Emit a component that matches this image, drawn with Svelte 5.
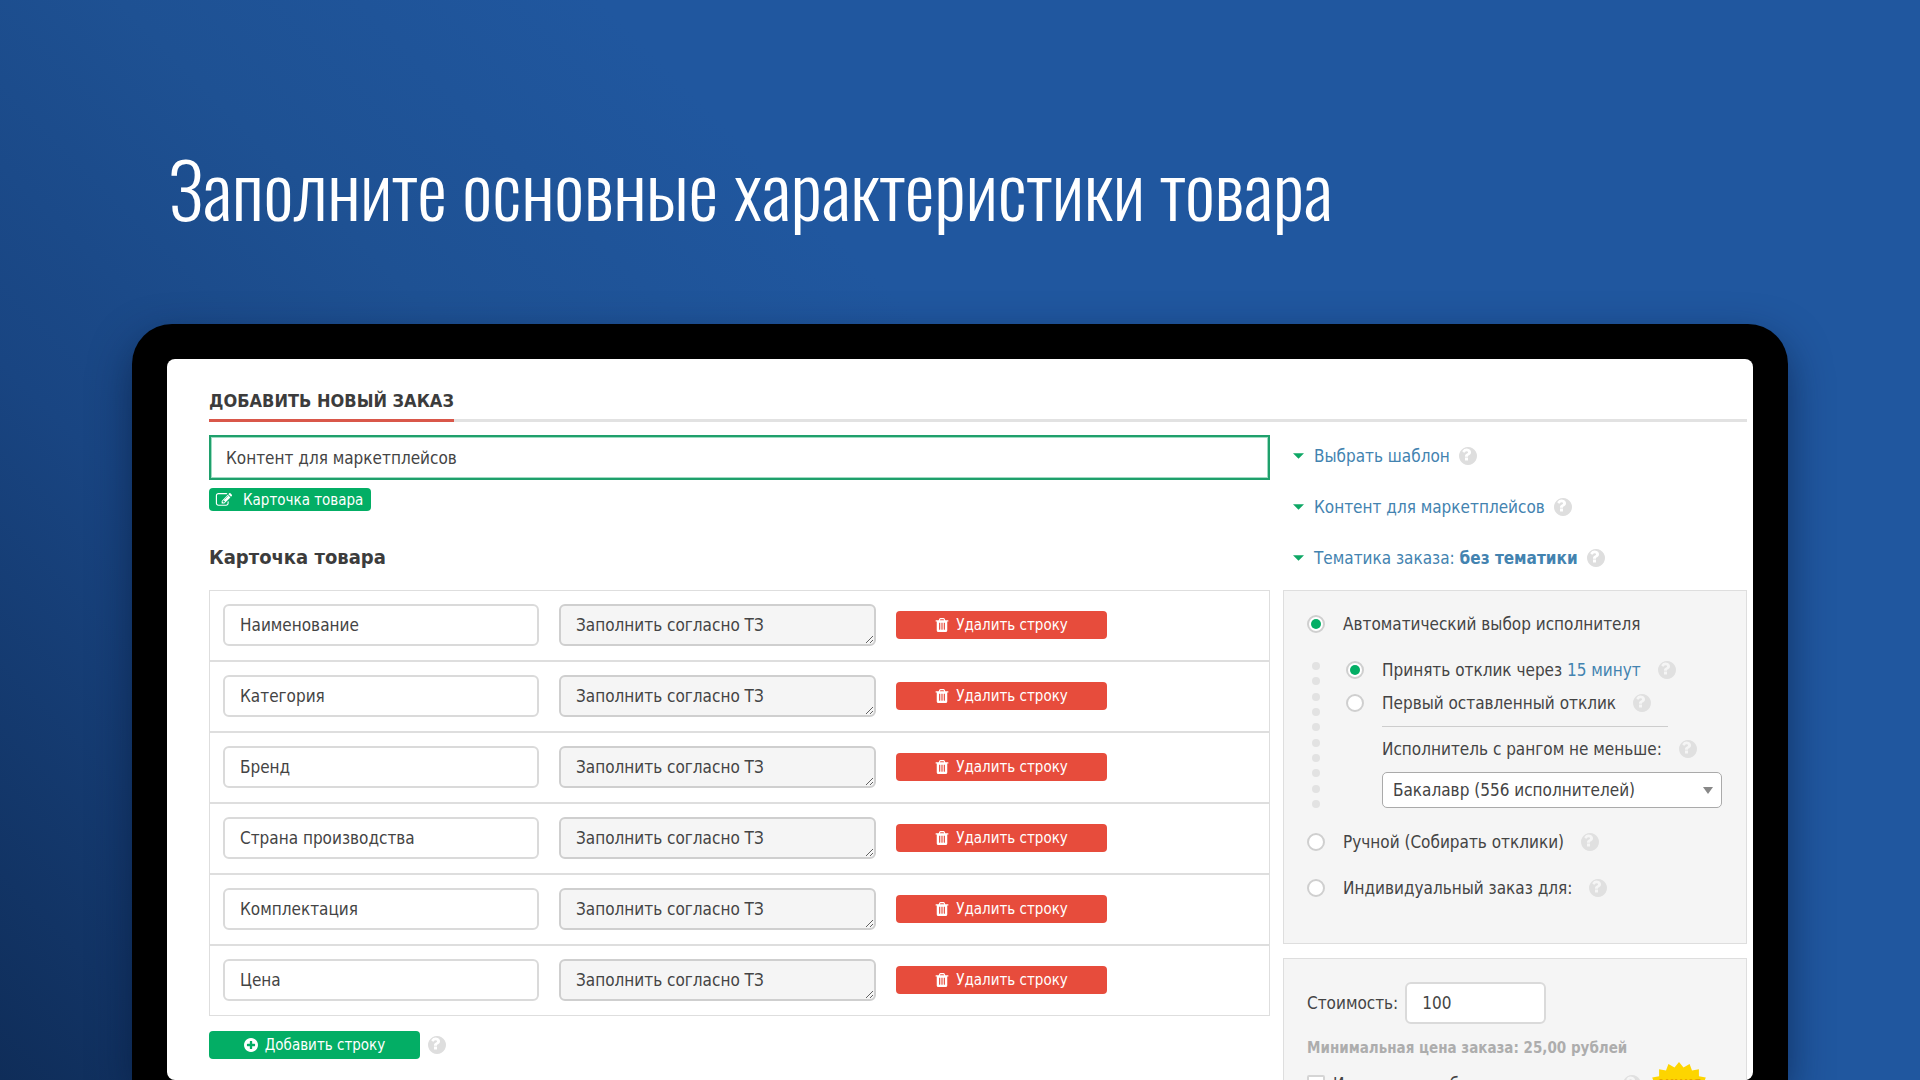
<script>
  const ICONS = {
    help: 'M896 1248v-192q0-14-9-23t-23-9h-192q-14 0-23 9t-9 23v192q0 14 9 23t23 9h192q14 0 23-9t9-23zM1152 576q0-88-55.5-163t-138.5-116-170-41q-243 0-371 213-15 24 8 42l132 100q7 6 19 6 16 0 25-12 53-68 86-92 34-24 86-24 48 0 85.5 26t37.5 59q0 38-20 61t-68 45q-63 28-115.5 86.5t-52.5 125.5v36q0 14 9 23t23 9h192q14 0 23-9t9-23q0-19 21.5-49.5t54.5-49.5q32-18 49-28.5t46-35 44.5-48 28-60.5 12.5-81zM1664 896q0 209-103 385.5t-279.5 279.5-385.5 103-385.5-103-279.5-279.5-103-385.5 103-385.5 279.5-279.5 385.5-103 385.5 103 279.5 279.5 103 385.5z',
    plus: 'M1344 960v-128q0-26-19-45t-45-19h-256v-256q0-26-19-45t-45-19h-128q-26 0-45 19t-19 45v256h-256q-26 0-45 19t-19 45v128q0 26 19 45t45 19h256v256q0 26 19 45t45 19h128q26 0 45-19t19-45v-256h256q26 0 45-19t19-45zM1664 896q0 209-103 385.5t-279.5 279.5-385.5 103-385.5-103-279.5-279.5-103-385.5 103-385.5 279.5-279.5 385.5-103 385.5 103 279.5 279.5 103 385.5z',
    trash: 'M704 1376v-704q0-14-9-23t-23-9h-64q-14 0-23 9t-9 23v704q0 14 9 23t23 9h64q14 0 23-9t9-23zm256 0v-704q0-14-9-23t-23-9h-64q-14 0-23 9t-9 23v704q0 14 9 23t23 9h64q14 0 23-9t9-23zm256 0v-704q0-14-9-23t-23-9h-64q-14 0-23 9t-9 23v704q0 14 9 23t23 9h64q14 0 23-9t9-23zm-544-992h448l-48-117q-7-9-17-11h-317q-10 2-17 11zm928 32v64q0 14-9 23t-23 9h-96v948q0 83-47 143.5t-113 60.5h-832q-66 0-113-58.5t-47-141.5v-952h-96q-14 0-23-9t-9-23v-64q0-14 9-23t23-9h309l70-167q15-37 54-63t79-26h320q40 0 79 26t54 63l70 167h309q14 0 23 9t9 23z',
    edit: 'M888 1184l116-116-152-152-116 116v56h96v96h56zm440-720q-16-16-33 1l-350 350q-17 17-1 33t33-1l350-350q17-17 1-33zm80 594v190q0 119-84.5 203.5t-203.5 84.5h-832q-119 0-203.5-84.5t-84.5-203.5v-832q0-119 84.5-203.5t203.5-84.5h832q63 0 117 25 15 7 18 23 3 17-9 29l-49 49q-14 14-32 8-23-6-45-6h-832q-66 0-113 47t-47 113v832q0 66 47 113t113 47h832q66 0 113-47t47-113v-126q0-13 9-22l64-64q15-15 35-7t20 29zm-96-738l288 288-672 672h-288v-288zm444 132l-92 92-288-288 92-92q28-28 68-28t68 28l152 152q28 28 28 68t-28 68z'
  };

  let rows = $state(
    ['Наименование', 'Категория', 'Бренд', 'Страна производства', 'Комплектация', 'Цена'].map((name) => ({
      name,
      value: 'Заполнить согласно ТЗ'
    }))
  );
  let mode = $state('auto');
  let accept = $state('delay');
  let title = $state('Контент для маркетплейсов');
  let price = $state('100');

  const links = [
    { text: 'Выбрать шаблон' },
    { text: 'Контент для маркетплейсов' },
    { text: 'Тематика заказа: ', strong: 'без тематики' }
  ];
  const dots = Array.from({ length: 10 });

  // Outline of the badge: 18 teeth alternating between two radii.
  const burst = Array.from({ length: 36 }, (_, i) => {
    const r = i % 2 ? 26 : 31;
    const a = (i * Math.PI) / 18 - Math.PI / 2;
    return `${(31 + r * Math.cos(a)).toFixed(1)},${(31 + r * Math.sin(a)).toFixed(1)}`;
  }).join(' ');

  const addRow = () => rows.push({ name: '', value: '' });
  const removeRow = (i) => rows.splice(i, 1);
</script>

{#snippet icon(name, cls)}
  <svg class={cls} viewBox="128 128 1536 1536" aria-hidden="true"><path fill="currentColor" fill-rule="evenodd" d={ICONS[name]} /></svg>
{/snippet}

{#snippet help()}
  <button type="button" class="help" aria-label="Подсказка">{@render icon('help', 'icon-help')}</button>
{/snippet}

<div class="stage">
  <header><h1>Заполните основные характеристики товара</h1></header>

  <div class="device">
    <main class="screen">
      <div class="tab-line"><h2>ДОБАВИТЬ НОВЫЙ ЗАКАЗ</h2></div>

      <form class="columns">
        <section class="left">
          <input class="order-title" type="text" aria-label="Название заказа" bind:value={title} />
          <button type="button" class="tag">{@render icon('edit', 'icon-edit')}Карточка товара</button>

          <h3>Карточка товара</h3>
          <ul class="rows">
            {#each rows as row, i}
              <li>
                <input class="field" type="text" aria-label="Характеристика" bind:value={row.name} />
                <textarea class="field value" rows="1" aria-label="Значение" bind:value={row.value}></textarea>
                <button type="button" class="btn remove" onclick={() => removeRow(i)}>
                  {@render icon('trash', 'icon-btn')}Удалить строку
                </button>
              </li>
            {/each}
          </ul>
          <div class="add-line">
            <button type="button" class="btn add" onclick={addRow}>{@render icon('plus', 'icon-btn')}Добавить строку</button>
            {@render help()}
          </div>
        </section>

        <aside>
          <ul class="links">
            {#each links as link}
              <li>
                <svg class="caret" viewBox="0 0 12 6" aria-hidden="true"><path d="M0 0h12L6 6z" fill="currentColor" /></svg>
                <a href="#options">{link.text}{#if link.strong}<b>{link.strong}</b>{/if}</a>
                {@render help()}
              </li>
            {/each}
          </ul>

          <div class="panel performers" id="options">
            <label class="line"><input type="radio" name="mode" value="auto" bind:group={mode} />Автоматический выбор исполнителя</label>
            <div class="sub">
              <div class="dots" aria-hidden="true">{#each dots as _}<i></i>{/each}</div>
              <div class="sub-body">
                <div class="line">
                  <input type="radio" id="delay" name="accept" value="delay" bind:group={accept} />
                  <label for="delay">Принять отклик через <a href="#delay">15 минут</a></label>
                  {@render help()}
                </div>
                <div class="line second">
                  <input type="radio" id="first" name="accept" value="first" bind:group={accept} />
                  <label for="first">Первый оставленный отклик</label>
                  {@render help()}
                </div>
                <div class="rank">
                  <hr />
                  <div class="line">
                    <label for="rank">Исполнитель с рангом не меньше:</label>
                    {@render help()}
                  </div>
                  <div class="select">
                    <select id="rank"><option>Бакалавр (556 исполнителей)</option></select>
                    <svg class="arrow" viewBox="0 0 10 7" aria-hidden="true"><path d="M0 0h10L5 7z" fill="currentColor" /></svg>
                  </div>
                </div>
              </div>
            </div>
            <div class="line mode">
              <input type="radio" id="manual" name="mode" value="manual" bind:group={mode} />
              <label for="manual">Ручной (Собирать отклики)</label>
              {@render help()}
            </div>
            <div class="line mode">
              <input type="radio" id="single" name="mode" value="single" bind:group={mode} />
              <label for="single">Индивидуальный заказ для:</label>
              {@render help()}
            </div>
          </div>

          <div class="panel cost">
            <div class="price">
              <label for="price">Стоимость:</label>
              <input id="price" class="field" type="text" bind:value={price} />
            </div>
            <p>Минимальная цена заказа: 25,00 рублей</p>
            <div class="line bonus">
              <input type="checkbox" id="bonus" />
              <label for="bonus">Использовать бонусные средства</label>
              {@render help()}
            </div>
            <span class="burst">
              <svg viewBox="0 0 62 62" aria-hidden="true"><polygon points={burst} fill="#fdd500" /></svg>
              <span>АКЦИЯ</span>
            </span>
          </div>
        </aside>
      </form>
    </main>
  </div>
</div>

<style>
  :global(body) {
    margin: 0;
    background: #20579f;
  }
  * {
    box-sizing: border-box;
  }
  h1, h2, h3, p, ul {
    margin: 0;
    padding: 0;
  }
  ul {
    list-style: none;
  }
  .stage {
    display: flex;
    flex-direction: column;
    height: 100vh;
    padding: 0 132px;
    overflow: hidden;
    background: linear-gradient(45deg, #0f2d59 0%, #194582 24%, #1e5193 40%, #20579f 56%);
    font: 17px/24px 'DejaVu Sans Condensed', 'DejaVu Sans', sans-serif;
    color: #444;
  }
  header {
    padding: 132px 37px 80px;
  }
  h1 {
    font: 300 75px/112px Oswald, 'Open Sans Condensed', sans-serif;
    color: #fff;
  }
  .device {
    flex: 1;
    display: flex;
    min-height: 0;
    padding: 35px 35px 0;
    border-radius: 40px 40px 0 0;
    background: #000;
    box-shadow: 0 16px 40px rgba(6, 24, 56, 0.6);
  }
  .screen {
    flex: 1;
    min-width: 0;
    padding: 30px 6px 0 42px;
    overflow: hidden;
    border-radius: 8px;
    background: #fff;
  }
  .tab-line {
    display: flex;
    margin-bottom: 13px;
    box-shadow: inset 0 -3px #e2e2e2;
  }
  h2 {
    padding-bottom: 6px;
    border-bottom: 3px solid #d9574a;
    font-size: 18px;
    line-height: 24px;
    color: #3c3c3c;
  }
  .columns {
    display: grid;
    grid-template-columns: 1061fr 464fr;
    gap: 13px;
    align-items: start;
  }
  input, textarea, select, button {
    margin: 0;
    font: inherit;
    color: inherit;
  }
  button {
    padding: 0;
    border: 0;
    background: none;
    cursor: pointer;
  }
  .order-title {
    display: block;
    width: 100%;
    height: 45px;
    padding: 0 15px;
    border: 2px solid #1fa06c;
    box-shadow: inset 0 0 0 1px #9fdcc2;
    background: #fff;
    outline: 0;
  }
  .tag {
    display: flex;
    align-items: center;
    gap: 12px;
    height: 23px;
    margin-top: 8px;
    padding: 0 8px;
    border-radius: 4px;
    background: #03ae65;
    color: #fff;
    font-size: 15px;
    line-height: 20px;
  }
  .icon-edit {
    width: 14px;
    height: 14px;
    overflow: visible;
  }
  h3 {
    margin: 32px 0 19px;
    font-size: 20px;
    line-height: 28px;
    color: #3c3c3c;
  }
  .rows li {
    display: grid;
    grid-template-columns: 316fr 317fr 211fr 142fr;
    gap: 20px;
    align-items: center;
    padding: 13px 0 14px 13px;
    border: 1px solid #dedede;
  }
  .field {
    width: 100%;
    height: 42px;
    padding: 8px 15px;
    border: 2px solid #dadada;
    border-radius: 6px;
    background: #fff;
    line-height: 22px;
  }
  .value {
    display: block;
    border-color: #cfcfcf;
    background: #f5f5f5;
    resize: both;
  }
  .btn {
    display: flex;
    align-items: center;
    justify-content: center;
    gap: 7px;
    height: 28px;
    border-radius: 4px;
    color: #fff;
    font-size: 15px;
    line-height: 20px;
  }
  .icon-btn {
    width: 14px;
    height: 14px;
  }
  .remove {
    background: #e74c3c;
  }
  .add-line {
    display: flex;
    align-items: center;
    gap: 8px;
    margin-top: 15px;
  }
  .add {
    width: 211px;
    background: #03ae65;
  }
  .help {
    display: flex;
    color: #dedede;
  }
  .icon-help {
    width: 18px;
    height: 18px;
  }
  .links {
    display: grid;
    gap: 27px;
    padding: 9px 0 20px 10px;
  }
  .links li {
    display: flex;
    align-items: center;
  }
  .caret {
    width: 11px;
    height: 6px;
    margin-right: 10px;
    color: #0ea765;
  }
  .links .help {
    margin-left: 9px;
  }
  a {
    color: #4383b0;
    text-decoration: none;
  }
  .panel {
    border: 1px solid #dedede;
    background: #f5f5f5;
  }
  .performers {
    padding: 21px 24px 43px 23px;
  }
  .line {
    display: flex;
    align-items: center;
  }
  .panel .help {
    margin-left: 17px;
    color: #e0e0e0;
  }
  input[type='radio'] {
    flex: none;
    display: grid;
    place-items: center;
    width: 18px;
    height: 18px;
    margin-right: 18px;
    border: 2px solid #cfcfcf;
    border-radius: 50%;
    background: #fff;
    appearance: none;
  }
  input[type='radio']:checked::before {
    content: '';
    width: 10px;
    height: 10px;
    border-radius: 50%;
    background: #03ae65;
  }
  .sub {
    display: flex;
    gap: 21px;
    margin-top: 22px;
  }
  .dots {
    display: flex;
    flex-direction: column;
    align-items: center;
    justify-content: space-between;
    width: 18px;
    padding-top: 4px;
  }
  .dots i {
    width: 8px;
    height: 8px;
    border-radius: 50%;
    background: #e2e2e2;
  }
  .sub-body {
    flex: 1;
  }
  .second {
    margin-top: 9px;
  }
  .rank {
    padding-left: 36px;
  }
  hr {
    width: 84%;
    margin: 11px 0 10px;
    border: 0;
    border-top: 1px solid #cdcdcd;
  }
  .select {
    position: relative;
    margin-top: 11px;
  }
  select {
    display: block;
    width: 100%;
    height: 36px;
    padding: 0 28px 0 10px;
    border: 1px solid #aaa;
    border-radius: 5px;
    background: #fff;
    appearance: none;
  }
  .arrow {
    position: absolute;
    top: 15px;
    right: 9px;
    width: 10px;
    height: 7px;
    color: #888;
    pointer-events: none;
  }
  .mode {
    margin-top: 22px;
  }
  .cost {
    position: relative;
    margin-top: 14px;
    padding: 23px;
  }
  .price {
    display: flex;
    align-items: center;
    gap: 7px;
  }
  .price .field {
    width: 141px;
  }
  .cost p {
    margin: 12px 0;
    font-size: 15px;
    font-weight: bold;
    color: #adadad;
  }
  input[type='checkbox'] {
    width: 18px;
    height: 18px;
    margin-right: 8px;
    border: 2px solid #d5d5d5;
    border-radius: 2px;
    background: #fff;
    appearance: none;
  }
  .burst {
    position: absolute;
    top: 103px;
    right: 36px;
    display: grid;
    place-items: start center;
    width: 62px;
    height: 62px;
  }
  .burst svg {
    position: absolute;
    inset: 0;
  }
  .burst span {
    position: relative;
    padding-top: 14px;
    font-size: 12px;
    font-weight: bold;
    line-height: 16px;
    color: #e8a400;
  }
</style>
